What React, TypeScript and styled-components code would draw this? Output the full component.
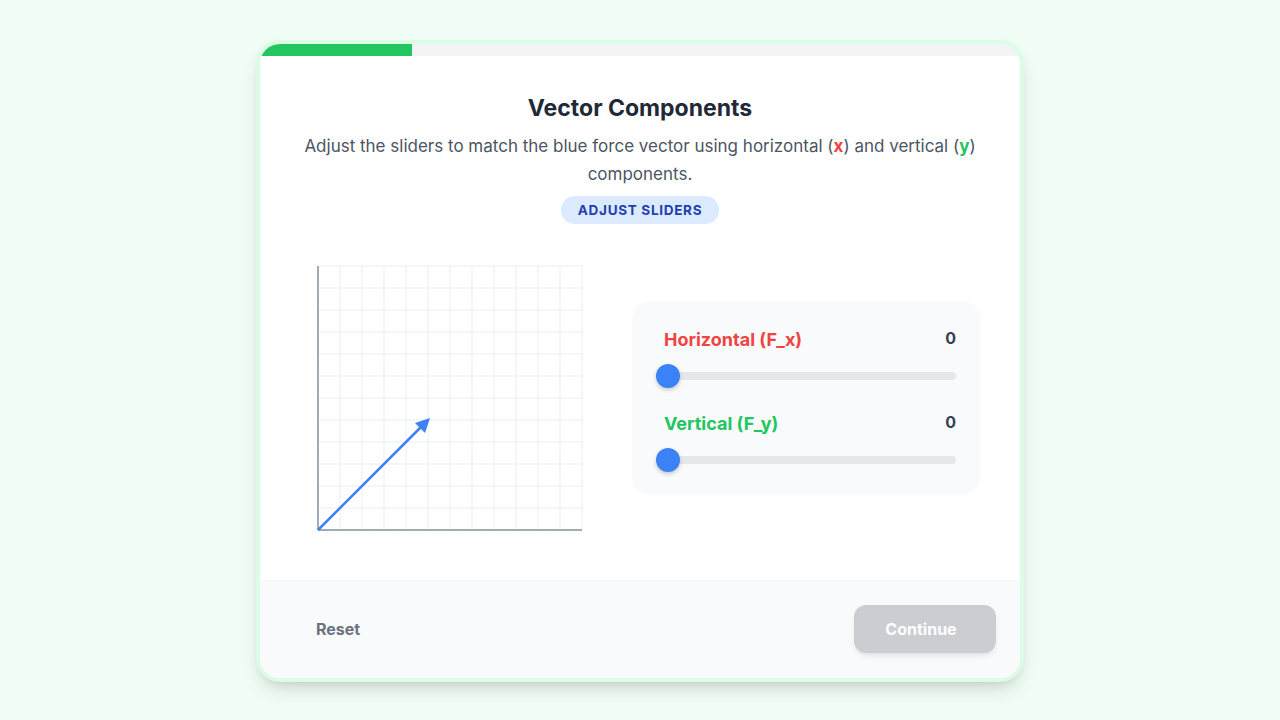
import React, { useState } from 'react';
import styled, { createGlobalStyle } from 'styled-components';

const GlobalStyle = createGlobalStyle`
  html, body {
    margin: 0;
    padding: 0;
    background: #f0fdf4;
    font-family: Inter, "Noto Sans", sans-serif;
  }
  * { box-sizing: border-box; }
`;

const Page = styled.div`
  width: 1280px;
  height: 720px;
  display: flex;
  justify-content: center;
  padding-top: 40px;
`;

const Card = styled.div`
  width: 768px;
  height: 642px;
  border: 4px solid #dcfce7;
  border-radius: 24px;
  background: #ffffff;
  overflow: hidden;
  display: flex;
  flex-direction: column;
  box-shadow: 0 10px 20px -6px rgba(0, 0, 0, 0.18), 0 4px 8px -4px rgba(0, 0, 0, 0.08);
`;

const Progress = styled.div`
  height: 12px;
  background: #f3f4f6;
  flex-shrink: 0;
`;

const ProgressFill = styled.div<{ $pct: number }>`
  height: 100%;
  width: ${(p) => p.$pct}%;
  background: #22c55e;
`;

const Body = styled.div`
  flex: 1;
  padding: 36px 40px 0;
  display: flex;
  flex-direction: column;
  align-items: center;
`;

const Title = styled.h1`
  margin: 0;
  font-size: 23px;
  line-height: 32px;
  font-weight: 700;
  color: #1f2937;
`;

const Subtitle = styled.p`
  margin: 8px 0 0;
  font-size: 17px;
  line-height: 28px;
  color: #4b5563;
  text-align: center;
  max-width: 680px;
`;

const Var = styled.b<{ $c: string }>`
  color: ${(p) => p.$c};
  font-weight: 700;
`;

const Badge = styled.span`
  margin-top: 8px;
  height: 28px;
  padding: 0 17px;
  display: inline-flex;
  align-items: center;
  border-radius: 14px;
  background: #dbeafe;
  color: #1e40af;
  font-size: 13.5px;
  font-weight: 700;
  letter-spacing: 0.7px;
  text-transform: uppercase;
`;

const Workspace = styled.div`
  margin-top: 40px;
  align-self: stretch;
  display: flex;
  align-items: center;
  gap: 32px;
`;

const GraphCol = styled.div`
  width: 300px;
  display: flex;
  justify-content: center;
`;

const Panel = styled.div`
  flex: 1;
  background: #f9fafb;
  border-radius: 16px;
  padding: 22px 24px;
  display: flex;
  flex-direction: column;
  gap: 20px;
`;

const SliderBlock = styled.div`
  display: flex;
  flex-direction: column;
  gap: 10px;
`;

const SliderHead = styled.div`
  display: flex;
  justify-content: space-between;
  align-items: center;
  padding-left: 8px;
  height: 30px;
`;

const SliderLabel = styled.span<{ $c: string }>`
  font-size: 18px;
  font-weight: 700;
  color: ${(p) => p.$c};
`;

const SliderValue = styled.span`
  font-size: 16px;
  font-weight: 700;
  color: #374151;
  margin-top: -2px;
`;

const Track = styled.div`
  position: relative;
  height: 8px;
  margin: 8px 0;
  border-radius: 4px;
  background: #e5e7eb;
`;

const Thumb = styled.div`
  position: absolute;
  top: 50%;
  width: 24px;
  height: 24px;
  margin-top: -12px;
  border-radius: 50%;
  background: #3b82f6;
  box-shadow: 0 2px 4px rgba(0, 0, 0, 0.2);
`;

const Footer = styled.div`
  flex-shrink: 0;
  background: #f9fafb;
  border-top: 1px solid #f3f4f6;
  padding: 24px 24px 25px;
  display: flex;
  justify-content: space-between;
  align-items: center;
`;

const ResetButton = styled.button`
  border: none;
  background: transparent;
  padding: 12px 32px;
  font-family: inherit;
  font-size: 16px;
  font-weight: 700;
  color: #6b7280;
  cursor: pointer;
`;

const ContinueButton = styled.button`
  width: 142px;
  height: 48px;
  border: none;
  border-radius: 12px;
  background: #cbcdd3;
  color: #ffffff;
  font-family: inherit;
  font-size: 16px;
  font-weight: 700;
  padding: 0 8px 0 0;
  box-shadow: 0 4px 6px -2px rgba(0, 0, 0, 0.12);
`;

const Graph = () => {
  const cell = 22;
  const ox = 2;
  const oy = 266;
  const lines = [];
  for (let i = 0; i <= 12; i++) {
    lines.push(<line key={'v' + i} x1={ox + i * cell} y1={2} x2={ox + i * cell} y2={oy} stroke="#ebedf0" strokeWidth={1} />);
    lines.push(<line key={'h' + i} x1={ox} y1={2 + i * cell} x2={ox + 264} y2={2 + i * cell} stroke="#ebedf0" strokeWidth={1} />);
  }
  const tx = ox + 112;
  const ty = oy - 112;
  return (
    <svg width={268} height={268} viewBox="0 0 268 268">
      {lines}
      <line x1={ox} y1={2} x2={ox} y2={oy} stroke="#a3abb5" strokeWidth={2} />
      <line x1={ox} y1={oy} x2={ox + 264} y2={oy} stroke="#a3abb5" strokeWidth={2} />
      <line x1={ox} y1={oy} x2={tx - 6} y2={ty + 6} stroke="#3b82f6" strokeWidth={2.5} />
      <polygon points={`${tx},${ty} ${tx - 15},${ty + 5} ${tx - 5},${ty + 15}`} fill="#3b82f6" />
    </svg>
  );
};

const Slider = ({ label, color, value }: { label: string; color: string; value: number }) => (
  <SliderBlock>
    <SliderHead>
      <SliderLabel $c={color}>{label}</SliderLabel>
      <SliderValue>{value}</SliderValue>
    </SliderHead>
    <Track>
      <Thumb style={{ left: `calc(${(value / 10) * 100}% - ${(value / 10) * 24}px)` }} />
    </Track>
  </SliderBlock>
);

export default function App() {
  const [fx] = useState(0);
  const [fy] = useState(0);
  return (
    <>
      <GlobalStyle />
      <Page>
        <Card>
          <Progress>
            <ProgressFill $pct={20} />
          </Progress>
          <Body>
            <Title>Vector Components</Title>
            <Subtitle>
              Adjust the sliders to match the blue force vector using horizontal (<Var $c="#ef4444">x</Var>) and
              vertical (<Var $c="#22c55e">y</Var>) components.
            </Subtitle>
            <Badge>Adjust Sliders</Badge>
            <Workspace>
              <GraphCol>
                <Graph />
              </GraphCol>
              <Panel>
                <Slider label="Horizontal (F_x)" color="#ef4444" value={fx} />
                <Slider label="Vertical (F_y)" color="#22c55e" value={fy} />
              </Panel>
            </Workspace>
          </Body>
          <Footer>
            <ResetButton>Reset</ResetButton>
            <ContinueButton>Continue</ContinueButton>
          </Footer>
        </Card>
      </Page>
    </>
  );
}
